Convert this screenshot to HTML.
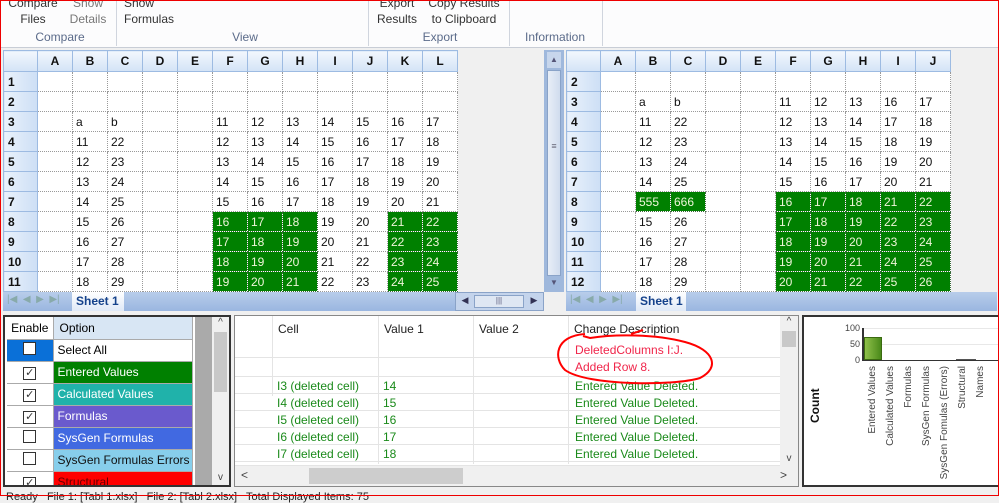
<!DOCTYPE html>
<html><head><meta charset="utf-8"><style>
*{box-sizing:border-box;margin:0;padding:0}
body{width:999px;height:496px;overflow:hidden;background:#f0f0f0;font-family:"Liberation Sans",sans-serif;position:relative}
.a{position:absolute}
.rib{left:0;top:0;width:999px;height:48px;background:#fcfcfd;border-bottom:1px solid #c8cdd6}
.rt{position:absolute;font-size:12px;color:#333;text-align:center;line-height:16px}
.gl{position:absolute;font-size:12px;color:#5b6b8a;top:30px;text-align:center}
.sep{position:absolute;top:0;width:1px;height:46px;background:#d0d5de}
table.g{position:absolute;border-collapse:collapse;table-layout:fixed;font-size:12px;background:#fff}
table.g td{height:20px;border:1px dotted #999;padding-left:3px;color:#111;white-space:nowrap;overflow:hidden}
table.g tr.h td{background:linear-gradient(#f2f7fd,#d3e3f6);border:1px solid #9dbbe2;font-weight:bold;text-align:center;padding:0;height:21px}
table.g td.r{background:linear-gradient(90deg,#eaf2fc,#cddff5);border:1px solid #9dbbe2;font-weight:bold;padding-left:4px}
table.g td.x{background:#008000;color:#eef5d8;border-color:#3a6a3a}
.tabbar{background:linear-gradient(#b8cdea,#9ab6e0);height:19px}
.nav{position:absolute;top:2px;font-size:10px;color:#8aa}
.sheet{position:absolute;top:0;height:19px;background:linear-gradient(#fff,#dfe9f7);font-weight:bold;font-size:12px;color:#15428b;padding:2px 0 0 4px}
.panel{position:absolute;background:#fff;border:1px solid #888}
.opt td{height:22px;font-size:12px;border-bottom:1px solid #aaa;border-right:1px solid #aaa}
.cb{display:inline-block;width:13px;height:13px;border:1px solid #333;background:#fff;font-size:11px;line-height:11px;text-align:center;color:#333}
.dr{position:absolute;left:0;width:545px;height:17px;border-bottom:1px solid #e4e4e4;font-size:12px;color:#1a8a1a}
.dr span{position:absolute;top:2px}
.vl{position:absolute;writing-mode:vertical-rl;transform:rotate(180deg);font-size:10px;color:#444;top:366px;white-space:nowrap}
</style></head><body>
<div class="a" style="left:0;top:0;width:999px;height:496px;border:1px solid #e00;z-index:50;pointer-events:none"></div>
<div class="a rib">
<div class="rt" style="left:8px;top:-5px;width:50px">Compare<br>Files</div>
<div class="rt" style="left:66px;top:-5px;width:44px;color:#777">Show<br>Details</div>
<div class="gl" style="left:20px;width:80px">Compare</div>
<div class="sep" style="left:116px"></div>
<div class="rt" style="left:124px;top:-5px;width:52px;text-align:left">Show<br>Formulas</div>
<div class="gl" style="left:220px;width:50px">View</div>
<div class="sep" style="left:368px"></div>
<div class="rt" style="left:376px;top:-5px;width:42px">Export<br>Results</div>
<div class="rt" style="left:428px;top:-5px;width:72px">Copy Results<br>to Clipboard</div>
<div class="gl" style="left:400px;width:80px">Export</div>
<div class="sep" style="left:509px"></div>
<div class="gl" style="left:520px;width:70px">Information</div>
<div class="sep" style="left:602px"></div>
</div>

<table class="g" style="left:3px;top:50px;width:454px">
<colgroup><col style="width:34px"><col span="12" style="width:35px"></colgroup>
<tr class="h"><td></td><td>A</td><td>B</td><td>C</td><td>D</td><td>E</td><td>F</td><td>G</td><td>H</td><td>I</td><td>J</td><td>K</td><td>L</td></tr>
<tr><td class="r">1</td><td></td><td></td><td></td><td></td><td></td><td></td><td></td><td></td><td></td><td></td><td></td><td></td></tr>
<tr><td class="r">2</td><td></td><td></td><td></td><td></td><td></td><td></td><td></td><td></td><td></td><td></td><td></td><td></td></tr>
<tr><td class="r">3</td><td></td><td>a</td><td>b</td><td></td><td></td><td>11</td><td>12</td><td>13</td><td>14</td><td>15</td><td>16</td><td>17</td></tr>
<tr><td class="r">4</td><td></td><td>11</td><td>22</td><td></td><td></td><td>12</td><td>13</td><td>14</td><td>15</td><td>16</td><td>17</td><td>18</td></tr>
<tr><td class="r">5</td><td></td><td>12</td><td>23</td><td></td><td></td><td>13</td><td>14</td><td>15</td><td>16</td><td>17</td><td>18</td><td>19</td></tr>
<tr><td class="r">6</td><td></td><td>13</td><td>24</td><td></td><td></td><td>14</td><td>15</td><td>16</td><td>17</td><td>18</td><td>19</td><td>20</td></tr>
<tr><td class="r">7</td><td></td><td>14</td><td>25</td><td></td><td></td><td>15</td><td>16</td><td>17</td><td>18</td><td>19</td><td>20</td><td>21</td></tr>
<tr><td class="r">8</td><td></td><td>15</td><td>26</td><td></td><td></td><td class="x">16</td><td class="x">17</td><td class="x">18</td><td>19</td><td>20</td><td class="x">21</td><td class="x">22</td></tr>
<tr><td class="r">9</td><td></td><td>16</td><td>27</td><td></td><td></td><td class="x">17</td><td class="x">18</td><td class="x">19</td><td>20</td><td>21</td><td class="x">22</td><td class="x">23</td></tr>
<tr><td class="r">10</td><td></td><td>17</td><td>28</td><td></td><td></td><td class="x">18</td><td class="x">19</td><td class="x">20</td><td>21</td><td>22</td><td class="x">23</td><td class="x">24</td></tr>
<tr><td class="r">11</td><td></td><td>18</td><td>29</td><td></td><td></td><td class="x">19</td><td class="x">20</td><td class="x">21</td><td>22</td><td>23</td><td class="x">24</td><td class="x">25</td></tr>
</table>

<div class="a" style="left:544px;top:50px;width:20px;height:242px;background:#9fb8dc"></div>
<div class="a" style="left:547px;top:52px;width:14px;height:16px;background:#c7d6ec;font-size:8px;color:#557;text-align:center;line-height:16px">▲</div>
<div class="a" style="left:547px;top:70px;width:14px;height:206px;background:linear-gradient(90deg,#e8eef7,#d0dcee);border:1px solid #8aa3c8;font-size:9px;text-align:center;line-height:150px;color:#667">≡</div>
<div class="a" style="left:547px;top:278px;width:14px;height:14px;font-size:8px;color:#557;text-align:center">▼</div>

<table class="g" style="left:566px;top:50px;width:384px">
<colgroup><col style="width:34px"><col span="10" style="width:35px"></colgroup>
<tr class="h"><td></td><td>A</td><td>B</td><td>C</td><td>D</td><td>E</td><td>F</td><td>G</td><td>H</td><td>I</td><td>J</td></tr>
<tr><td class="r">2</td><td></td><td></td><td></td><td></td><td></td><td></td><td></td><td></td><td></td><td></td></tr>
<tr><td class="r">3</td><td></td><td>a</td><td>b</td><td></td><td></td><td>11</td><td>12</td><td>13</td><td>16</td><td>17</td></tr>
<tr><td class="r">4</td><td></td><td>11</td><td>22</td><td></td><td></td><td>12</td><td>13</td><td>14</td><td>17</td><td>18</td></tr>
<tr><td class="r">5</td><td></td><td>12</td><td>23</td><td></td><td></td><td>13</td><td>14</td><td>15</td><td>18</td><td>19</td></tr>
<tr><td class="r">6</td><td></td><td>13</td><td>24</td><td></td><td></td><td>14</td><td>15</td><td>16</td><td>19</td><td>20</td></tr>
<tr><td class="r">7</td><td></td><td>14</td><td>25</td><td></td><td></td><td>15</td><td>16</td><td>17</td><td>20</td><td>21</td></tr>
<tr><td class="r">8</td><td></td><td class="x">555</td><td class="x">666</td><td></td><td></td><td class="x">16</td><td class="x">17</td><td class="x">18</td><td class="x">21</td><td class="x">22</td></tr>
<tr><td class="r">9</td><td></td><td>15</td><td>26</td><td></td><td></td><td class="x">17</td><td class="x">18</td><td class="x">19</td><td class="x">22</td><td class="x">23</td></tr>
<tr><td class="r">10</td><td></td><td>16</td><td>27</td><td></td><td></td><td class="x">18</td><td class="x">19</td><td class="x">20</td><td class="x">23</td><td class="x">24</td></tr>
<tr><td class="r">11</td><td></td><td>17</td><td>28</td><td></td><td></td><td class="x">19</td><td class="x">20</td><td class="x">21</td><td class="x">24</td><td class="x">25</td></tr>
<tr><td class="r">12</td><td></td><td>18</td><td>29</td><td></td><td></td><td class="x">20</td><td class="x">21</td><td class="x">22</td><td class="x">25</td><td class="x">26</td></tr>
</table>

<div class="a tabbar" style="left:3px;top:292px;width:452px">
<div class="nav" style="left:4px">|◀ &nbsp;◀ &nbsp;▶ &nbsp;▶|</div>
<div class="sheet" style="left:69px;width:52px">Sheet 1</div></div>
<div class="a" style="left:455px;top:292px;width:89px;height:19px;background:#c4d4ec;border:1px solid #8aa3c8">
<div class="a" style="left:2px;top:2px;width:14px;height:13px;font-size:9px;color:#335;text-align:center">◀</div>
<div class="a" style="left:18px;top:2px;width:50px;height:13px;background:#dfe7f3;border:1px solid #8aa3c8;font-size:8px;text-align:center;color:#557">|||</div>
<div class="a" style="left:71px;top:2px;width:14px;height:13px;font-size:9px;color:#335;text-align:center">▶</div></div>
<div class="a tabbar" style="left:566px;top:292px;width:431px">
<div class="nav" style="left:4px">|◀ &nbsp;◀ &nbsp;▶ &nbsp;▶|</div>
<div class="sheet" style="left:70px;width:50px">Sheet 1</div></div>

<div class="panel" style="left:3px;top:315px;width:228px;height:172px;border:2px solid #333;overflow:hidden">
<table class="opt" style="position:absolute;left:2px;top:0;border-collapse:collapse;width:186px">
<tr><td style="width:46px;background:#fff;text-align:center;height:22px">Enable</td><td style="background:#d8e6f4;padding-left:6px">Option</td></tr>
<tr><td style="background:#0a70d8;text-align:center"><span class="cb"></span></td><td style="padding-left:4px">Select All</td></tr>
<tr><td style="text-align:center"><span class="cb">✓</span></td><td style="background:#008000;color:#fff;padding-left:4px">Entered Values</td></tr>
<tr><td style="text-align:center"><span class="cb">✓</span></td><td style="background:#20b2aa;color:#fff;padding-left:4px">Calculated Values</td></tr>
<tr><td style="text-align:center"><span class="cb">✓</span></td><td style="background:#6a5acd;color:#fff;padding-left:4px">Formulas</td></tr>
<tr><td style="text-align:center"><span class="cb"></span></td><td style="background:#4169e1;color:#fff;padding-left:4px">SysGen Formulas</td></tr>
<tr><td style="text-align:center"><span class="cb"></span></td><td style="background:#87ceeb;color:#111;padding-left:4px">SysGen Formulas Errors</td></tr>
<tr><td style="text-align:center"><span class="cb">✓</span></td><td style="background:#f00;color:#600;padding-left:4px">Structural</td></tr>
</table>
<div class="a" style="left:190px;top:0;width:17px;height:168px;background:#aaa"></div>
<div class="a" style="left:207px;top:0;width:17px;height:168px;background:#f0f0f0;font-size:10px;text-align:center;color:#444">^<div style="margin:4px 2px;height:60px;background:#c8c8c8"></div><div style="position:absolute;bottom:2px;width:17px">v</div></div>
</div>

<div class="panel" style="left:234px;top:315px;width:565px;height:172px;overflow:hidden">
<div class="a" style="left:37px;top:0;width:1px;height:80px;background:#e4e4e4"></div>
<div class="a" style="left:143px;top:0;width:1px;height:148px;background:#e4e4e4"></div>
<div class="a" style="left:238px;top:0;width:1px;height:148px;background:#e4e4e4"></div>
<div class="a" style="left:333px;top:0;width:1px;height:148px;background:#e4e4e4"></div>
<div class="a" style="left:43px;top:6px;font-size:12px;color:#222">Cell</div>
<div class="a" style="left:149px;top:6px;font-size:12px;color:#222">Value 1</div>
<div class="a" style="left:244px;top:6px;font-size:12px;color:#222">Value 2</div>
<div class="a" style="left:339px;top:6px;font-size:12px;color:#222">Change Description</div>
<div class="a" style="left:340px;top:27px;font-size:12px;color:#f0254a">DeletedColumns I:J.</div>
<div class="dr" style="top:41px;height:1px;border:none;background:#e4e4e4"></div>
<div class="a" style="left:340px;top:44px;font-size:12px;color:#f0254a">Added Row 8.</div>
<div class="dr" style="top:44px;height:17px"></div>
<div class="dr" style="top:61px"><span style="left:42px">I3 (deleted cell)</span><span style="left:148px">14</span><span style="left:340px">Entered Value Deleted.</span></div>
<div class="dr" style="top:78px"><span style="left:42px">I4 (deleted cell)</span><span style="left:148px">15</span><span style="left:340px">Entered Value Deleted.</span></div>
<div class="dr" style="top:95px"><span style="left:42px">I5 (deleted cell)</span><span style="left:148px">16</span><span style="left:340px">Entered Value Deleted.</span></div>
<div class="dr" style="top:112px"><span style="left:42px">I6 (deleted cell)</span><span style="left:148px">17</span><span style="left:340px">Entered Value Deleted.</span></div>
<div class="dr" style="top:129px"><span style="left:42px">I7 (deleted cell)</span><span style="left:148px">18</span><span style="left:340px">Entered Value Deleted.</span></div>
<div class="dr" style="top:146px;height:4px;overflow:hidden"></div>
<div class="a" style="left:545px;top:0;width:18px;height:150px;background:#f0f0f0;font-size:10px;text-align:center;color:#444">^<div style="margin:4px 2px;height:16px;background:#c8c8c8"></div><div style="position:absolute;bottom:2px;width:18px">v</div></div>
<div class="a" style="left:0;top:150px;width:563px;height:20px;background:#f0f0f0"><div class="a" style="left:6px;top:2px;font-size:12px;color:#444">&lt;</div><div class="a" style="left:74px;top:2px;width:154px;height:16px;background:#cdcdcd"></div><div class="a" style="left:545px;top:2px;font-size:12px;color:#444">&gt;</div></div>
<svg class="a" style="left:300px;top:12px" width="185" height="58" viewBox="0 0 185 58"><path d="M50 6 C20 8 18 30 30 42 C52 58 140 58 165 50 C185 40 180 22 150 14 C120 6 80 6 55 10 L48 8" fill="none" stroke="#f00" stroke-width="2"/><path d="M96 6 L108 2" stroke="#f00" stroke-width="2"/></svg>
</div>

<div class="panel" style="left:802px;top:315px;width:197px;height:172px;border:2px solid #333;border-right:none"></div>
<div class="a" style="left:808px;top:383px;font-size:12px;font-weight:bold;color:#111;writing-mode:vertical-rl;transform:rotate(180deg);height:40px">Count</div>
<div class="a" style="left:842px;top:323px;font-size:9px;color:#444;width:18px;text-align:right">100</div>
<div class="a" style="left:842px;top:339px;font-size:9px;color:#444;width:18px;text-align:right">50</div>
<div class="a" style="left:842px;top:355px;font-size:9px;color:#444;width:18px;text-align:right">0</div>
<div class="a" style="left:862px;top:328px;width:137px;height:1px;background:#e8e8e8"></div>
<div class="a" style="left:862px;top:344px;width:137px;height:1px;background:#e8e8e8"></div>
<div class="a" style="left:862px;top:328px;width:2px;height:33px;background:#333"></div>
<div class="a" style="left:862px;top:360px;width:137px;height:1px;background:#333"></div>
<div class="a" style="left:864px;top:337px;width:18px;height:23px;background:linear-gradient(90deg,#8fc04a,#4a8a1a);border:1px solid #3a6a10"></div>
<div class="a" style="left:956px;top:359px;width:20px;height:1px;background:#555"></div>
<div class="vl" style="left:867px">Entered Values</div>
<div class="vl" style="left:885px">Calculated Values</div>
<div class="vl" style="left:903px">Formulas</div>
<div class="vl" style="left:921px">SysGen Formulas</div>
<div class="vl" style="left:939px">SysGen Fomulas (Errors)</div>
<div class="vl" style="left:957px">Structural</div>
<div class="vl" style="left:975px">Names</div>

<div class="a" style="left:6px;top:491px;font-size:11px;color:#222;white-space:nowrap">Ready &nbsp; File 1: [Tabl 1.xlsx] &nbsp; File 2: [Tabl 2.xlsx] &nbsp; Total Displayed Items: 75</div>
</body></html>
